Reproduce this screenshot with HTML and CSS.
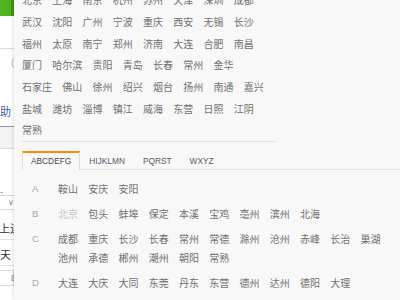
FILE: index.html
```html
<!DOCTYPE html>
<html lang="zh">
<head>
<meta charset="utf-8">
<link rel="stylesheet" href="styles.css">
</head>
<body>
<div class="bg">
  <div class="logo"></div>
  <div class="rule r-top"></div>
  <div class="paren">(</div>
  <div class="help">帮助</div>
  <div class="navline"></div>
  <div class="band"></div>
  <div class="dash">-</div>
  <div class="select"><span class="chev">∨</span></div>
  <div class="label l1">上连</div>
  <div class="label l2">天</div>
  <div class="datebox"><span class="cal">E</span></div>
</div>

<div class="popup">
  <ul class="hot">
    <li>北京</li><li>上海</li><li>南京</li><li>杭州</li><li>苏州</li><li>天津</li><li>深圳</li><li>成都</li>
    <li>武汉</li><li>沈阳</li><li>广州</li><li>宁波</li><li>重庆</li><li>西安</li><li>无锡</li><li>长沙</li>
    <li>福州</li><li>太原</li><li>南宁</li><li>郑州</li><li>济南</li><li>大连</li><li>合肥</li><li>南昌</li>
    <li>厦门</li><li>哈尔滨</li><li>贵阳</li><li>青岛</li><li>长春</li><li>常州</li><li>金华</li>
    <li>石家庄</li><li>佛山</li><li>徐州</li><li>绍兴</li><li>烟台</li><li>扬州</li><li>南通</li><li>嘉兴</li>
    <li>盐城</li><li>潍坊</li><li>淄博</li><li>镇江</li><li>威海</li><li>东营</li><li>日照</li><li>江阴</li>
    <li>常熟</li>
  </ul>
  <div class="tabs">
    <span class="tab active">ABCDEFG</span>
    <span class="tab">HIJKLMN</span>
    <span class="tab">PQRST</span>
    <span class="tab">WXYZ</span>
  </div>
  <div class="groups">
    <div class="group">
      <span class="letter">A</span>
      <ul class="cities"><li>鞍山</li><li>安庆</li><li>安阳</li></ul>
    </div>
    <div class="group">
      <span class="letter">B</span>
      <ul class="cities"><li class="dim">北京</li><li>包头</li><li>蚌埠</li><li>保定</li><li>本溪</li><li>宝鸡</li><li>亳州</li><li>滨州</li><li>北海</li></ul>
    </div>
    <div class="group">
      <span class="letter">C</span>
      <ul class="cities"><li>成都</li><li>重庆</li><li>长沙</li><li>长春</li><li>常州</li><li>常德</li><li>滁州</li><li>沧州</li><li>赤峰</li><li>长治</li><li>巢湖</li><li>池州</li><li>承德</li><li>郴州</li><li>潮州</li><li>朝阳</li><li>常熟</li></ul>
    </div>
    <div class="group">
      <span class="letter">D</span>
      <ul class="cities"><li>大连</li><li>大庆</li><li>大同</li><li>东莞</li><li>丹东</li><li>东营</li><li>德州</li><li>达州</li><li>德阳</li><li>大理</li></ul>
    </div>
  </div>
</div>
</body>
</html>
```

FILE: styles.css
```css
html, body {
  margin: 0;
  padding: 0;
}
body {
  width: 400px;
  height: 300px;
  overflow: hidden;
  position: relative;
  background: #ffffff;
  font-family: "Noto Sans CJK SC", "Liberation Sans", sans-serif;
}

/* background page fragment (left strip) */
.bg {
  width: 14px;
  height: 300px;
  overflow: hidden;
  display: flex;
  flex-direction: column;
}
.logo {
  height: 16px;
  flex: none;
  background: linear-gradient(90deg, #52b81f 0, #4bb01b 11px, #3a9610 11.5px, #3a9610 14px);
}
.rule {
  height: 1px;
  background: #dcdcdc;
  flex: none;
}
.r-top { margin-top: 32px; }
.paren {
  margin-top: 7px;
  height: 12px;
  line-height: 12px;
  font-size: 11px;
  color: #bbb;
  padding-left: 11px;
  font-family: "Liberation Sans", sans-serif;
}
.help {
  margin-top: 36px;
  height: 14px;
  line-height: 14px;
  font-size: 11px;
  color: #3b5ea8;
  white-space: nowrap;
  margin-left: -11px;
}
.navline {
  margin-top: 8px;
  height: 1px;
  background: #8a9aaa;
  flex: none;
}
.band {
  height: 21px;
  background: #f2f3f4;
  border-bottom: 1px solid #dcdcdc;
  flex: none;
}
.dash {
  margin-top: 40px;
  height: 6px;
  line-height: 6px;
  font-size: 9px;
  color: #777;
  font-family: "Liberation Sans", sans-serif;
}
.select {
  height: 13px;
  border-top: 1px solid #d8d8d8;
  border-bottom: 1px solid #d8d8d8;
  flex: none;
}
.chev {
  display: block;
  font-size: 8px;
  line-height: 13px;
  color: #888;
  padding-left: 8px;
  font-family: "DejaVu Sans", sans-serif;
}
.label {
  font-size: 11px;
  line-height: 14px;
  color: #333;
  white-space: nowrap;
  flex: none;
  border-bottom: 1px solid #e0e0e0;
}
.l1 { margin-top: 11px; padding-bottom: 4px; margin-left: -1px; }
.l2 { margin-top: 7px; padding-bottom: 4px; }
.datebox {
  margin-top: 4px;
  height: 14px;
  border: 1px solid #d8d8d8;
  border-left: none;
  flex: none;
}
.cal {
  display: block;
  font-size: 9px;
  line-height: 14px;
  color: #999;
  padding-left: 11px;
  font-family: "Liberation Sans", sans-serif;
}

/* popup overlay */
.popup {
  position: absolute;
  left: 14px;
  top: -10.83px;
  width: 386px;
  height: 310.83px;
  overflow: hidden;
  background: #f8f8f8;
  box-shadow: -1px 0 3px rgba(0, 0, 0, 0.12);
}
.hot {
  list-style: none;
  margin: 0 0 0 8px;
  padding: 0;
  width: 255px;
  display: flex;
  flex-wrap: wrap;
  border-bottom: 1px solid #e3e3e3;
}
.hot li,
.cities li {
  font-size: 10px;
  color: #707070;
  white-space: nowrap;
  margin-right: 10.25px;
}
.hot li { line-height: 21.67px; }

.tabs {
  margin: 9px 0 0 8px;
  display: flex;
  border-bottom: 1px solid #e3e3e3;
}
.tab {
  font-family: "Liberation Sans", sans-serif;
  font-size: 8.33px;
  line-height: 16px;
  color: #555a66;
  padding: 0 8px;
  border: 1px solid transparent;
  border-top-width: 2px;
  border-bottom: none;
}
.tab.active {
  color: #444;
  border-color: #dedede;
  border-top-color: #ff8a00;
  background: #f9f9f9;
  margin-bottom: -1px;
  padding-bottom: 1px;
}

.groups {
  margin: 9.5px 0 0 8px;
}
.group {
  display: flex;
  align-items: flex-start;
  margin-bottom: 6px;
}
.letter {
  flex: none;
  width: 26px;
  padding-left: 10px;
  font-family: "Liberation Sans", sans-serif;
  font-size: 9.5px;
  line-height: 19px;
  color: #a8a8a8;
}
.cities {
  list-style: none;
  margin: 0;
  padding: 0;
  width: 336px;
  display: flex;
  flex-wrap: wrap;
}
.cities li { line-height: 19px; }
.cities li.dim { color: #c4c4c4; }
```
